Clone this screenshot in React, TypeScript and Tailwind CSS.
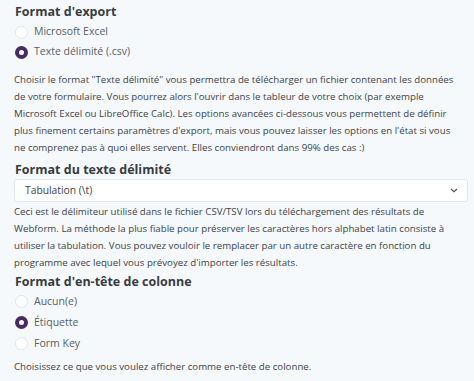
import React from "react";

function Radio({ checked, label, h }: { checked?: boolean; label: string; h: string }) {
  return (
    <div className={`flex items-center ${h}`}>
      {checked ? (
        <span className="w-[13px] h-[13px] rounded-full border-[4px] border-[#4b2a63] bg-white ml-[15px] shrink-0" />
      ) : (
        <span className="w-[13px] h-[13px] rounded-full border border-[#e2e6ea] bg-white ml-[15px] shrink-0" />
      )}
      <span className="ml-[6px] text-[10.5px] text-[#585e65]">{label}</span>
    </div>
  );
}

export default function App() {
  return (
    <div
      className="w-[474px] h-[381px] bg-[#f6f9fc] overflow-hidden text-[#3d4248]"
      style={{ fontFamily: '"Open Sans", "Noto Sans", sans-serif' }}
    >
      <div className="pt-[2px]">
        <h2 className="px-[15px] text-[12.5px] font-bold leading-[20px] text-[#373c42]">Format d'export</h2>
        <Radio h="h-[20px]" label="Microsoft Excel" />
        <Radio h="h-[20px]" checked label="Texte délimité (.csv)" />
        <p className="pl-[14px] pr-[12px] mt-[9px] text-[9.7px] leading-[17px]">
          Choisir le format "Texte délimité" vous permettra de télécharger un fichier contenant les données de votre formulaire. Vous pourrez alors l'ouvrir dans le tableur de votre choix (par exemple Microsoft Excel ou LibreOffice Calc). Les options avancées ci-dessous vous permettent de définir plus finement certains paramètres d'export, mais vous pouvez laisser les options en l'état si vous ne comprenez pas à quoi elles servent. Elles conviendront dans 99% des cas :)
        </p>
        <h2 className="px-[15px] mt-[5px] text-[12.5px] font-bold leading-[18px] text-[#373c42]">Format du texte délimité</h2>
        <div className="ml-[14px] mr-[6px] h-[23px] bg-white border border-[#e3e7eb] rounded-[3px] flex items-center justify-between pl-[10px] pr-[9px]">
          <span className="text-[10.3px] text-[#3d4248]">Tabulation (\t)</span>
          <svg width="8" height="5" viewBox="0 0 8 5" fill="none">
            <path d="M1 1l3 2.8L7 1" stroke="#555" strokeWidth="1.2" />
          </svg>
        </div>
        <p className="pl-[14px] pr-[12px] mt-[1px] text-[9.7px] leading-[17px]">
          Ceci est le délimiteur utilisé dans le fichier CSV/TSV lors du téléchargement des résultats de Webform. La méthode la plus fiable pour préserver les caractères hors alphabet latin consiste à utiliser la tabulation. Vous pouvez vouloir le remplacer par un autre caractère en fonction du programme avec lequel vous prévoyez d'importer les résultats.
        </p>
        <h2 className="px-[15px] mt-[2px] text-[12.5px] font-bold leading-[18px] text-[#373c42]">Format d'en-tête de colonne</h2>
        <Radio h="h-[21px]" label="Aucun(e)" />
        <Radio h="h-[21px]" checked label="Étiquette" />
        <Radio h="h-[21px]" label="Form Key" />
        <p className="pl-[14px] pr-[12px] mt-[4px] text-[9.7px] leading-[17px]">
          Choisissez ce que vous voulez afficher comme en-tête de colonne.
        </p>
      </div>
    </div>
  );
}
